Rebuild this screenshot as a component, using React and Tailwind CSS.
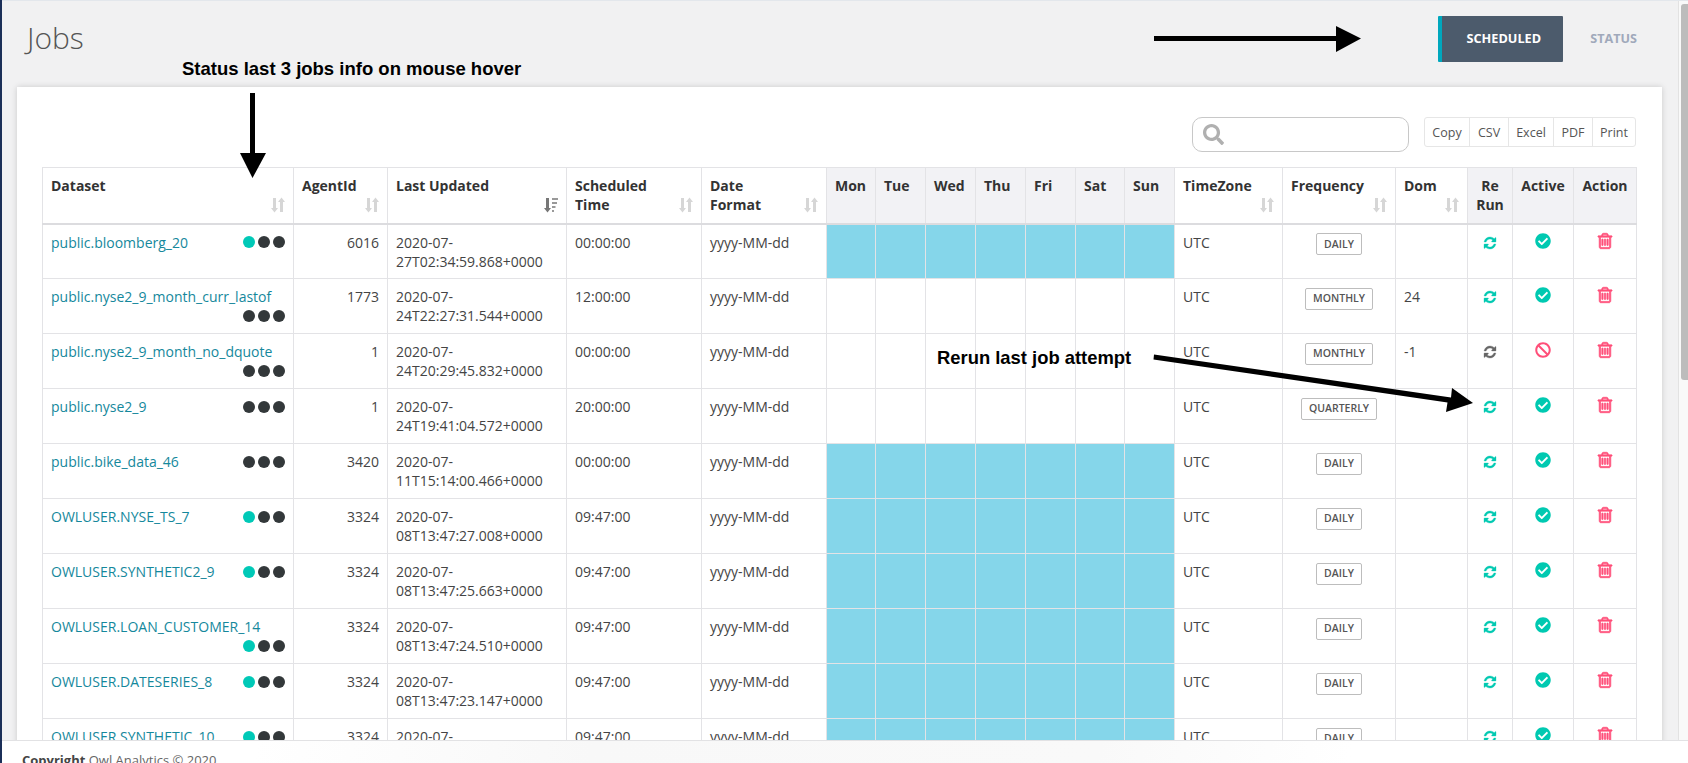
import React from "react";
import { FaCheckCircle, FaBan, FaSearch } from "react-icons/fa";

const widths = [251, 94, 179, 135, 125, 49, 50, 50, 50, 50, 49, 50, 108, 113, 72, 45, 61, 63];
const days = ["Mon", "Tue", "Wed", "Thu", "Fri", "Sat", "Sun"];

const rows = [
  ["public.bloomberg_20", 1, "6016", "2020-07-", "27T02:34:59.868+0000", "00:00:00", true, "DAILY", "", true],
  ["public.nyse2_9_month_curr_lastof", 0, "1773", "2020-07-", "24T22:27:31.544+0000", "12:00:00", false, "MONTHLY", "24", true],
  ["public.nyse2_9_month_no_dquote", 0, "1", "2020-07-", "24T20:29:45.832+0000", "00:00:00", false, "MONTHLY", "-1", false],
  ["public.nyse2_9", 0, "1", "2020-07-", "24T19:41:04.572+0000", "20:00:00", false, "QUARTERLY", "", true],
  ["public.bike_data_46", 0, "3420", "2020-07-", "11T15:14:00.466+0000", "00:00:00", true, "DAILY", "", true],
  ["OWLUSER.NYSE_TS_7", 1, "3324", "2020-07-", "08T13:47:27.008+0000", "09:47:00", true, "DAILY", "", true],
  ["OWLUSER.SYNTHETIC2_9", 1, "3324", "2020-07-", "08T13:47:25.663+0000", "09:47:00", true, "DAILY", "", true],
  ["OWLUSER.LOAN_CUSTOMER_14", 1, "3324", "2020-07-", "08T13:47:24.510+0000", "09:47:00", true, "DAILY", "", true],
  ["OWLUSER.DATESERIES_8", 1, "3324", "2020-07-", "08T13:47:23.147+0000", "09:47:00", true, "DAILY", "", true],
  ["OWLUSER.SYNTHETIC_10", 1, "3324", "2020-07-", "08T13:47:21.902+0000", "09:47:00", true, "DAILY", "", true],
];

function Refresh({ className }) {
  return (
    <svg viewBox="0 0 1792 1792" fill="currentColor" stroke="currentColor" strokeWidth="40" className={className}>
      <path d="M1639 1056q0 5-1 7-64 268-268 434.500t-478 166.500q-146 0-282.500-55t-243.500-157l-129 129q-19 19-45 19t-45-19-19-45v-448q0-26 19-45t45-19h448q26 0 45 19t19 45-19 45l-137 137q71 66 161 102t187 36q134 0 250-65t186-179q11-17 53-117 8-23 30-23h192q13 0 22.500 9.500t9.500 22.500zm25-800v448q0 26-19 45t-45 19h-448q-26 0-45-19t-19-45 19-45l138-138q-148-137-349-137-134 0-250 65t-186 179q-11 17-53 117-8 23-30 23h-199q-13 0-22.500-9.500t-9.500-22.500v-7q65-268 270-434.500t480-166.500q146 0 284 55.500t245 156.500l130-129q19-19 45-19t45 19 19 45z" />
    </svg>
  );
}

function Trash({ className }) {
  return (
    <svg viewBox="0 0 1792 1792" fill="currentColor" stroke="currentColor" strokeWidth="70" className={className}>
      <path d="M704 736v576q0 14-9 23t-23 9h-64q-14 0-23-9t-9-23v-576q0-14 9-23t23-9h64q14 0 23 9t9 23zm256 0v576q0 14-9 23t-23 9h-64q-14 0-23-9t-9-23v-576q0-14 9-23t23-9h64q14 0 23 9t9 23zm256 0v576q0 14-9 23t-23 9h-64q-14 0-23-9t-9-23v-576q0-14 9-23t23-9h64q14 0 23 9t9 23zm128 724v-948h-896v948q0 22 7 40.500t14.500 27 10.500 8.500h832q3 0 10.500-8.500t14.500-27 7-40.500zm-672-1076h448l-48-117q-7-9-17-11h-317q-10 2-17 11zm928 32v64q0 14-9 23t-23 9h-96v948q0 83-47 143.500t-113 60.500h-832q-66 0-113-58.500t-47-141.500v-952h-96q-14 0-23-9t-9-23v-64q0-14 9-23t23-9h309l70-167q15-37 54-63t79-26h320q40 0 79 26t54 63l70 167h309q14 0 23 9t9 23z" />
    </svg>
  );
}

function SortIcon({ active }) {
  return (
    <svg width="14" height="16" viewBox="0 0 14 16" className="absolute right-[8px] bottom-[10px]">
      <path d="M2 1h3v10h2l-3.500 4.500L0 11h2z" fill={active ? "#777" : "#d6d6d6"} />
      {active ? (
        <path d="M8 1h6v2H8zM8 5h5v2H8zM8 9h3.500v2H8zM8 13h2v2H8z" fill="#999" />
      ) : (
        <path d="M9 15h3V5h2L10.500.5 7 5h2z" fill="#d6d6d6" />
      )}
    </svg>
  );
}

function Head({ children, sort, gray, center, active }) {
  return (
    <th
      className={`relative h-[56px] border border-b-2 border-[#e3e3e6] border-b-[#dcdcdf] pt-[8px] pb-0 pl-[8px] align-top text-[14px] leading-[19px] font-bold text-[#333] ${
        sort ? "pr-[24px]" : "pr-[8px]"
      } ${gray ? "bg-[#f2f2f5]" : "bg-white"} ${center ? "text-center" : "text-left"}`}
    >
      {children}
      {sort && <SortIcon active={active} />}
    </th>
  );
}

function Dots({ lit }) {
  return (
    <span className="ml-auto flex h-[19px] items-center gap-[3px]">
      <span className={`h-[12px] w-[12px] rounded-full ${lit ? "bg-[#00c9b7]" : "bg-[#33383a]"}`} />
      <span className="h-[12px] w-[12px] rounded-full bg-[#33383a]" />
      <span className="h-[12px] w-[12px] rounded-full bg-[#33383a]" />
    </span>
  );
}

const td = "h-[55px] border border-[#e3e3e6] px-[8px] pt-[8px] pb-0 align-top";

function Row({ r }) {
  const [name, lit, agent, d1, d2, time, blue, freq, dom, on] = r;
  return (
    <tr>
      <td className={td}>
        <div className="flex flex-wrap justify-between">
          <span className="text-[#15889c]">{name}</span>
          <Dots lit={lit} />
        </div>
      </td>
      <td className={`${td} text-right`}>{agent}</td>
      <td className={td}>
        {d1}
        <br />
        {d2}
      </td>
      <td className={td}>{time}</td>
      <td className={td}>yyyy-MM-dd</td>
      {days.map((d) => (
        <td key={d} className={`${td} ${blue ? "bg-[#85d6ea]" : ""}`} />
      ))}
      <td className={td}>UTC</td>
      <td className={`${td} text-center`}>
        <span className="inline-flex h-[22px] items-center rounded-[2px] border border-[#bdbdbd] px-[7px] text-[10.5px] font-semibold text-[#555]">
          {freq}
        </span>
      </td>
      <td className={td}>{dom}</td>
      <td className={`${td} text-center`}>
        <Refresh className={`mx-auto mt-[3px] h-[14px] w-[14px] ${on ? "text-[#00c9b1]" : "text-[#666]"}`} />
      </td>
      <td className={`${td} text-center`}>
        {on ? (
          <FaCheckCircle className="mx-auto h-[16px] w-[16px] text-[#00c9b1]" />
        ) : (
          <FaBan className="mx-auto h-[16px] w-[16px] text-[#ff4f79]" />
        )}
      </td>
      <td className={`${td} text-center`}>
        <Trash className="mx-auto -mt-[1px] h-[18px] w-[18px] text-[#ff4f79]" />
      </td>
    </tr>
  );
}

export default function App() {
  return (
    <div
      className="relative flex h-[763px] w-[1688px] overflow-hidden bg-white text-[#444]"
      style={{ fontFamily: '"Open Sans", sans-serif' }}
    >
      <div className="w-[2px] shrink-0 bg-[#1b2f58]" />
      <div className="flex min-w-0 flex-1 flex-col">
        <div className="flex min-h-0 flex-1 border-t border-[#e3e7ec]">
          <main className="min-w-0 flex-1 overflow-hidden bg-[#f1f1f2]">
            <header className="flex h-[86px] items-start justify-between pr-[41px] pl-[25px]">
              <h1 className="mt-[15px] text-[30px] leading-[44px] font-light text-[#555]">Jobs</h1>
              <div className="mt-[15px] flex items-center">
                <div className="flex h-[46px] w-[125px] items-center justify-center rounded-[1px] border-l-4 border-[#00a7bd] bg-[#4c5b6c] pl-[2px] text-[12.7px] font-bold text-white">
                  SCHEDULED
                </div>
                <div className="ml-[27px] text-[12.6px] font-bold text-[#a0a9bb]">STATUS</div>
              </div>
            </header>
            <section className="mr-[16px] ml-[15px] h-[660px] bg-white pt-[30px] pr-[25px] pl-[25px] shadow-[0_0_6px_rgba(0,0,0,0.16)]">
              <div className="mr-[1px] mb-[15px] flex h-[35px] items-start justify-end gap-[15px]">
                <div className="flex h-[35px] w-[217px] items-center rounded-[10px] border border-[#c8c8c8] pl-[10px]">
                  <FaSearch className="h-[21px] w-[21px] text-[#b0b0b0]" />
                </div>
                <div className="flex h-[30px] rounded-[3px] border border-[#e6e6e6] text-[12.5px] text-[#555]">
                  {[["Copy", 44], ["CSV", 39], ["Excel", 45], ["PDF", 39], ["Print", 43]].map(([t, w], i) => (
                    <span
                      key={t}
                      style={{ width: w }}
                      className={`flex items-center justify-center pt-[2px] ${i ? "border-l border-[#e6e6e6]" : ""}`}
                    >
                      {t}
                    </span>
                  ))}
                </div>
              </div>
              <table className="w-[1594px] table-fixed border-collapse text-[14px] leading-[19px] text-[#444]">
                <colgroup>
                  {widths.map((w, i) => (
                    <col key={i} style={{ width: w }} />
                  ))}
                </colgroup>
                <thead>
                  <tr>
                    <Head sort>Dataset</Head>
                    <Head sort>AgentId</Head>
                    <Head sort active>Last Updated</Head>
                    <Head sort>Scheduled Time</Head>
                    <Head sort>
                      Date
                      <br />
                      Format
                    </Head>
                    {days.map((d) => (
                      <Head key={d} gray>{d}</Head>
                    ))}
                    <Head sort>TimeZone</Head>
                    <Head sort>Frequency</Head>
                    <Head sort>Dom</Head>
                    <Head gray center>Re Run</Head>
                    <Head gray center>Active</Head>
                    <Head gray center>Action</Head>
                  </tr>
                </thead>
                <tbody>
                  {rows.map((r) => (
                    <Row key={r[0]} r={r} />
                  ))}
                </tbody>
              </table>
            </section>
          </main>
          <div className="w-[10px] shrink-0 border-l border-[#e2e2e2] bg-[#f9f9f9] pt-[3px] pl-[2px]">
            <div className="h-[376px] rounded-tl-[3px] rounded-bl-[3px] bg-[#bcbcbc]" />
          </div>
        </div>
        <footer className="relative z-10 h-[23px] shrink-0 overflow-hidden border-t border-[#e2e2e4] bg-[linear-gradient(100deg,#fff_15%,#f8f8f8_35%,#f9f9f9_65%,#fff_80%)] pt-[9px] pl-[20px] text-[13px] leading-[20px] text-[#666]">
          <b className="text-[#444]">Copyright</b> Owl Analytics © 2020
        </footer>
      </div>

      <div
        className="absolute top-[59px] left-[182px] text-[18.5px] leading-[20px] font-bold whitespace-nowrap text-black"
        style={{ fontFamily: '"Liberation Sans", sans-serif' }}
      >
        Status last 3 jobs info on mouse hover
      </div>
      <div
        className="absolute top-[348px] left-[937px] text-[18.4px] leading-[20px] font-bold whitespace-nowrap text-black"
        style={{ fontFamily: '"Liberation Sans", sans-serif' }}
      >
        Rerun last job attempt
      </div>
      <svg className="pointer-events-none absolute top-0 left-0" width="1688" height="763">
        <path d="M250 93h5v60h11l-13.500 25L240 153h10z" fill="#000" />
        <path d="M1154 36h182V26l25 12.500L1336 52V41h-182z" fill="#000" />
        <path d="M1154 354.500l297 43 1-9.500 21 15-27 9 1.500-9.500-294-43z" fill="#000" />
      </svg>
    </div>
  );
}
